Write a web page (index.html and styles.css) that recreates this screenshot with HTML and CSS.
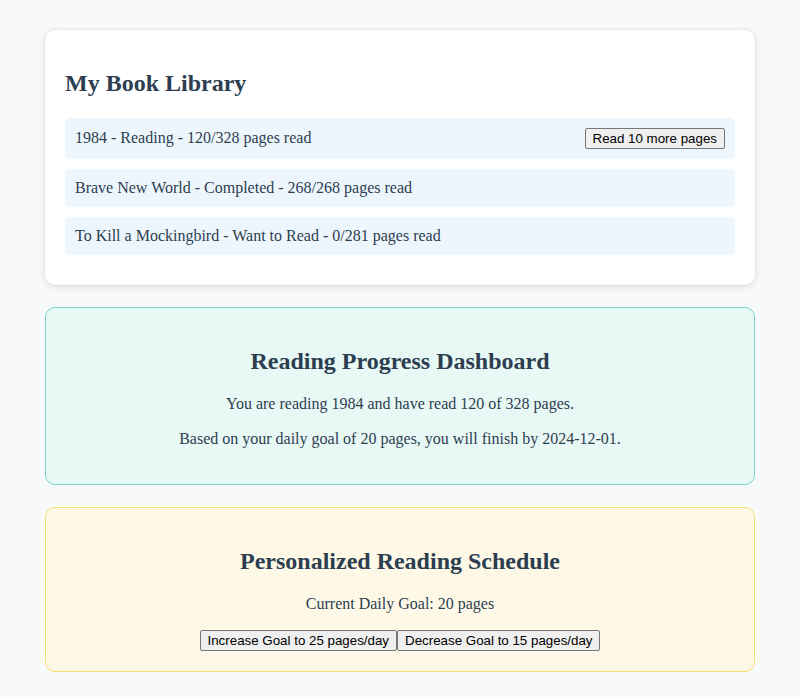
FILE: index.html
```html
<!DOCTYPE html>
<html lang="en">
<head>
<meta charset="utf-8">
<title>Reading App</title>
<link rel="stylesheet" href="styles.css">
</head>
<body>
<main class="app">
  <section class="card library">
    <h2>My Book Library</h2>
    <ul class="book-list">
      <li class="book"><span>1984 - Reading - 120/328 pages read</span><button class="btn">Read 10 more pages</button></li>
      <li class="book"><span>Brave New World - Completed - 268/268 pages read</span></li>
      <li class="book"><span>To Kill a Mockingbird - Want to Read - 0/281 pages read</span></li>
    </ul>
  </section>
  <section class="card dashboard">
    <h2>Reading Progress Dashboard</h2>
    <p>You are reading 1984 and have read 120 of 328 pages.</p>
    <p>Based on your daily goal of 20 pages, you will finish by 2024-12-01.</p>
  </section>
  <section class="card schedule">
    <h2>Personalized Reading Schedule</h2>
    <p>Current Daily Goal: 20 pages</p>
    <div class="actions"><button class="btn">Increase Goal to 25 pages/day</button><button class="btn">Decrease Goal to 15 pages/day</button></div>
  </section>
</main>
</body>
</html>
```

FILE: styles.css
```css
html, body {
  margin: 0;
  padding: 0;
}
body {
  background: #f7f9fa;
  font-family: "Liberation Serif", "Times New Roman", serif;
  font-size: 16px;
  line-height: 1.15;
  color: #2c3e50;
}
.app {
  padding: 30px 45px;
}
.card {
  border-radius: 10px;
  padding: 20px;
  margin-bottom: 21.5px;
}
.card h2 {
  font-size: 24px;
  font-weight: bold;
  margin: 20px 0;
  color: #2c3e50;
}
.card p {
  margin: 16px 0;
}
.library {
  background: #ffffff;
  box-shadow: 0 0 0 1px rgba(0, 0, 0, 0.035), 0 2px 8px rgba(0, 0, 0, 0.1);
}
.book-list {
  list-style: none;
  margin: 0;
  padding: 0;
}
.book {
  display: flex;
  justify-content: space-between;
  align-items: center;
  background: #eef6fd;
  border-radius: 5px;
  padding: 10px;
  margin-bottom: 10px;
}
.dashboard {
  background: #e8f8f5;
  border: 1px solid #76d7c4;
  text-align: center;
}
.schedule {
  background: #fef9e7;
  border: 1px solid #f7dc6f;
  text-align: center;
}
.btn {
  font-family: "Liberation Sans", Arial, sans-serif;
  font-size: 13.333px;
  line-height: 15px;
  color: #000;
  background: #efefef;
  border: 1px solid #767676;
  border-radius: 2px;
  padding: 2px 7px;
}
.actions {
  display: flex;
  justify-content: center;
}
```
